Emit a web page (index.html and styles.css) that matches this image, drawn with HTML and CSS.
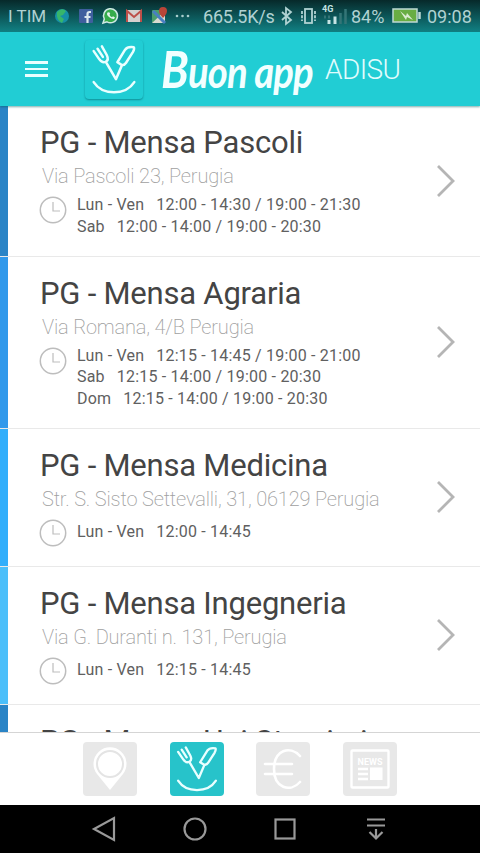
FILE: index.html
```
<!DOCTYPE html>
<html lang="it">
<head>
  <meta charset="UTF-8">
  <meta name="viewport" content="width=device-width, initial-scale=1.0">
  <title>Buon app ADISU</title>
  <link rel="stylesheet" href="styles.css">
</head>
<body>

  <!-- Shared icons -->
  <svg class="sprite" width="0" height="0">
    <symbol id="cutlery" viewBox="0 0 60 60">
      <g fill="none" stroke="currentColor" stroke-width="2.600" stroke-linecap="round" stroke-linejoin="round">
        <path d="M9 11l5.500 8q3.500 5 7 3t1-7l-5-9M13 8.500l5.500 8.500M22 23l10 17L38 26"/>
        <path d="M33.500 22.500l8-13q2.500-3.500 9-2.500q1 1-1 5l-7 11q-2 3-5 2l-4-2.500z"/>
        <path d="M9 43c9 14 33 14 42 0"/>
      </g>
    </symbol>
    <symbol id="clock" viewBox="0 0 28 28">
      <g fill="none" stroke="#bdbdbd">
        <circle cx="14" cy="14" r="12.700" stroke-width="1.500"/>
        <path d="M14 6v9h7" stroke-width="1.200"/>
      </g>
    </symbol>
    <symbol id="arrow" viewBox="0 0 20 34">
      <path d="M2 2l15 15L2 32" fill="none" stroke="#b5b5b5" stroke-width="2.800"/>
    </symbol>
  </svg>

  <!-- Status Bar -->
  <div class="status-bar">
    <span class="carrier">I TIM</span>
    <svg class="notifications" width="140" height="20" viewBox="0 0 140 20">
      <circle cx="8" cy="10" r="7" fill="#168fa5"/>
      <path d="M3 6q5-5 9-1l-3 4-3 1 4 3-2 4q-6-3-5-11z" fill="#37b56a"/>
      <rect x="25" y="3" width="14" height="14" rx="1" fill="#3f5f9e"/>
      <path d="M37 6h-1.500q-2 0-2 2v9M30.500 11h6" fill="none" stroke="#dbe8ee" stroke-width="2.200"/>
      <path d="M49 17l1.300-4A7 7 0 1 1 53 15.800z" fill="#35ab4b" stroke="#cfe9e4" stroke-width="1.500"/>
      <path d="M53.500 6.500q-1.500 2 1.500 4.500t5 2l1-1.500-2-1.300-1 1q-2-.7-2.500-2.500l.7-1-1-1.500z" fill="#e1f2ee"/>
      <rect x="72" y="4" width="16" height="12" rx="1" fill="#d5d0cf"/>
      <path d="M73 16V5l7 6 7-6v11" fill="none" stroke="#bd4f49" stroke-width="2"/>
      <rect x="98" y="4" width="13" height="13" rx="1" fill="#4b9e6d"/>
      <path d="M98 17L111 5v12z" fill="#d8dad0"/>
      <path d="M99 5l12 12" stroke="#4a7fc1" stroke-width="3"/>
      <path d="M109 12q-4-4-4-7a4 4 0 0 1 8 0q0 3-4 7z" fill="#b94538"/>
      <g fill="#a9cdcd"><circle cx="123" cy="10" r="1.300"/><circle cx="128.500" cy="10" r="1.300"/><circle cx="134" cy="10" r="1.300"/></g>
    </svg>
    <span class="speed">665.5K/s</span>
    <svg class="signals" width="70" height="26" viewBox="0 0 70 26">
      <g fill="none" stroke="#b0d2d2" stroke-width="1.800">
        <path d="M3 9l9 8-5 4V5l5 4-9 8"/>
        <rect x="26" y="6" width="7" height="14"/>
        <path d="M23 8v10M36 8v10" stroke-dasharray="3 1.200"/>
      </g>
      <text class="network" x="43" y="8.500">4G</text>
      <path d="M50 17v4M56 13.500v7.500" stroke="#c5e4e4" stroke-width="3"/>
      <path d="M61.500 10v11M66.500 6v15" stroke="#347577" stroke-width="2.500"/>
      <path d="M45 14h7" stroke="#347577" stroke-width="3" stroke-dasharray="2 2"/>
    </svg>
    <span class="percent">84%</span>
    <svg class="battery" width="30" height="16" viewBox="0 0 30 16">
      <rect x="2" y="1" width="24" height="13" fill="#69ad43" stroke="#bfdad5" stroke-width="1.500"/>
      <path d="M28.500 4v7" stroke="#bfdad5" stroke-width="2.500"/>
      <path d="M9 3l6 5 1-3 6 7-6-3-1 3z" fill="#dcebd2"/>
    </svg>
    <span class="time">09:08</span>
  </div>

  <!-- Header Section -->
  <header class="navbar">
    <div class="hamburger">
      <div></div>
      <div></div>
      <div></div>
    </div>
    <div class="logo"><svg width="58" height="59"><use href="#cutlery"/></svg></div>
    <div class="brand">Buon app</div>
    <div class="brand-sub">ADISU</div>
  </header>

  <!-- Canteen List -->
  <main class="canteens">
    <article class="card blue-1">
      <div class="info">
        <h2>PG - Mensa Pascoli</h2>
        <p class="address">Via Pascoli 23, Perugia</p>
        <div class="hours">
          <svg class="clock" width="28" height="28"><use href="#clock"/></svg>
          <ul>
            <li><span>Lun - Ven</span>12:00 - 14:30 / 19:00 - 21:30</li>
            <li><span>Sab</span>12:00 - 14:00 / 19:00 - 20:30</li>
          </ul>
        </div>
      </div>
      <svg class="arrow" width="20" height="34"><use href="#arrow"/></svg>
    </article>

    <article class="card blue-2">
      <div class="info">
        <h2>PG - Mensa Agraria</h2>
        <p class="address">Via Romana, 4/B Perugia</p>
        <div class="hours">
          <svg class="clock" width="28" height="28"><use href="#clock"/></svg>
          <ul>
            <li><span>Lun - Ven</span>12:15 - 14:45 / 19:00 - 21:00</li>
            <li><span>Sab</span>12:15 - 14:00 / 19:00 - 20:30</li>
            <li><span>Dom</span>12:15 - 14:00 / 19:00 - 20:30</li>
          </ul>
        </div>
      </div>
      <svg class="arrow" width="20" height="34"><use href="#arrow"/></svg>
    </article>

    <article class="card blue-3">
      <div class="info">
        <h2>PG - Mensa Medicina</h2>
        <p class="address">Str. S. Sisto Settevalli, 31, 06129 Perugia</p>
        <div class="hours">
          <svg class="clock" width="28" height="28"><use href="#clock"/></svg>
          <ul>
            <li><span>Lun - Ven</span>12:00 - 14:45</li>
          </ul>
        </div>
      </div>
      <svg class="arrow" width="20" height="34"><use href="#arrow"/></svg>
    </article>

    <article class="card blue-4">
      <div class="info">
        <h2>PG - Mensa Ingegneria</h2>
        <p class="address">Via G. Duranti n. 131, Perugia</p>
        <div class="hours">
          <svg class="clock" width="28" height="28"><use href="#clock"/></svg>
          <ul>
            <li><span>Lun - Ven</span>12:15 - 14:45</li>
          </ul>
        </div>
      </div>
      <svg class="arrow" width="20" height="34"><use href="#arrow"/></svg>
    </article>

    <article class="card blue-1">
      <div class="info">
        <h2>PG - Mensa Uni Stranieri</h2>
      </div>
    </article>
  </main>

  <!-- Tab Bar -->
  <nav class="tabs">
    <div class="tab">
      <svg width="54" height="54" viewBox="0 0 54 54">
        <path d="M27 48L14 32A16.500 16.500 0 1 1 40 32z" fill="#fff"/>
        <circle cx="27" cy="22" r="13" fill="none" stroke="#e4e4e4" stroke-width="2"/>
      </svg>
    </div>
    <div class="tab active"><svg width="54" height="54"><use href="#cutlery"/></svg></div>
    <div class="tab">
      <svg width="54" height="54" viewBox="0 0 54 54">
        <path d="M44 14C34 3 18 8 18 27s16 24 26 13M9 22h27M9 32h27" fill="none" stroke="#fff" stroke-width="2.600" stroke-linecap="round"/>
      </svg>
    </div>
    <div class="tab">
      <svg width="54" height="54" viewBox="0 0 54 54">
        <rect x="8.500" y="8.500" width="37" height="37" rx="1" fill="none" stroke="#fff" stroke-width="2.400"/>
        <text class="news" x="14.500" y="23" textLength="25">NEWS</text>
        <path d="M15 27h10M15 32h10M15 37h10" stroke="#fff" stroke-width="2.400"/>
        <rect x="27" y="25.500" width="12.500" height="12.500" fill="#fff"/>
      </svg>
    </div>
  </nav>

  <!-- System Buttons -->
  <div class="system-bar">
    <svg width="30" height="30" viewBox="0 0 30 30"><path d="M25 4v22L5 15z"/></svg>
    <svg width="30" height="30" viewBox="0 0 30 30"><circle cx="15" cy="15" r="10.500"/></svg>
    <svg width="30" height="30" viewBox="0 0 30 30"><rect x="5.500" y="5.500" width="19" height="19"/></svg>
    <svg width="30" height="30" viewBox="0 0 30 30"><path d="M6 5.500h18M6 11.500h18M15 15v9M8.500 18l6.500 6.500 6.500-6.500"/></svg>
  </div>

</body>
</html>
```
FILE: styles.css
```
* {
  margin: 0;
  padding: 0;
  box-sizing: border-box;
  font-family: Roboto, sans-serif;
}

body {
  display: flex;
  flex-direction: column;
  height: 853px;
  overflow: hidden;
  background-color: #fff;
}

svg {
  display: block;
  flex-shrink: 0;
}

.sprite {
  position: absolute;
}

/* Status Bar */
.status-bar {
  display: flex;
  align-items: center;
  flex-shrink: 0;
  height: 32px;
  padding-left: 8px;
  background: linear-gradient(#07292a, #118184);
  color: #b0d2d2;
  font-size: 18px;
  white-space: nowrap;
}

.carrier {
  width: 46px;
  font-size: 17px;
}

.speed {
  width: 76px;
  margin-left: 9px;
  letter-spacing: -0.200px;
}

.signals {
  margin-right: 2px;
}

.network {
  font-size: 9px;
  font-weight: bold;
  fill: #c5e4e4;
}

.percent {
  width: 40px;
}

.battery {
  margin-right: 6px;
}

/* Header Styles */
.navbar {
  display: flex;
  align-items: center;
  flex-shrink: 0;
  height: 74.300px;
  padding-left: 25px;
  background-color: #21cdd4;
  color: #fff;
  box-shadow: 0 1px 2px rgba(0, 90, 90, 0.5);
  z-index: 1;
}

.hamburger {
  width: 23px;
}

.hamburger div {
  height: 2.500px;
  margin: 4px 0;
  background-color: #e9ffff;
}

.logo {
  margin-left: 37px;
  border-radius: 4px;
  color: #e9ffff;
  box-shadow: 0 1px 2px rgba(0, 100, 110, 0.6);
}

.brand {
  width: 164px;
  margin-left: 18px;
  color: #f2ffff;
  font-family: "Segoe Script", Lato, cursive;
  font-size: 44px;
  font-style: italic;
  font-weight: bold;
  letter-spacing: -1px;
  line-height: 62px;
  white-space: nowrap;
  transform: scaleX(0.87);
  transform-origin: left;
}

.brand::first-letter {
  font-size: 52px;
}

.brand-sub {
  font-size: 28px;
  font-weight: 300;
  letter-spacing: -0.600px;
  color: #e0fcfd;
}

/* Canteen List */
.canteens {
  flex: 1;
  min-height: 0;
  overflow: hidden;
}

.card {
  display: flex;
  align-items: center;
  padding: 18px 24px 19px 40px;
  border-bottom: 1px solid #e9e9e9;
}

.blue-1 {
  box-shadow: inset 8px 0 #2a84c6;
}

.blue-2 {
  box-shadow: inset 8px 0 #3199eb;
}

.blue-3 {
  box-shadow: inset 8px 0 #31aefb;
}

.blue-4 {
  box-shadow: inset 8px 0 #4bbffa;
}

.info {
  flex: 1;
}

.card h2 {
  height: 36px;
  color: #444;
  font-size: 31px;
  font-weight: 400;
  letter-spacing: -0.220px;
  line-height: 37px;
  white-space: nowrap;
}

.address {
  height: 34px;
  padding-left: 2px;
  color: #a0a0a0;
  font-size: 20px;
  font-weight: 200;
  letter-spacing: -0.170px;
  line-height: 32px;
  white-space: nowrap;
}

.hours {
  display: flex;
  align-items: center;
  min-height: 30px;
}

.clock {
  align-self: flex-start;
  margin: 2px 10px 0 -1px;
}

.hours ul {
  list-style: none;
}

.hours li {
  color: #606060;
  font-size: 16px;
  letter-spacing: 0.200px;
  line-height: 21.330px;
  white-space: nowrap;
}

.hours span {
  margin-right: 12px;
}

/* Tab Bar */
.tabs {
  display: flex;
  align-items: center;
  justify-content: center;
  gap: 32.500px;
  flex-shrink: 0;
  height: 73px;
  border-top: 1px solid #d5d5d5;
  background-color: #fff;
}

.tab {
  border-radius: 4px;
  background-color: #e8e8e8;
}

.tab.active {
  background-color: #27c3ca;
  color: #e9ffff;
}

.news {
  font-size: 9px;
  font-weight: bold;
  fill: #fff;
}

/* System Buttons */
.system-bar {
  display: flex;
  align-items: center;
  justify-content: center;
  gap: 60.500px;
  flex-shrink: 0;
  height: 48px;
  background-color: #000;
}

.system-bar svg {
  fill: none;
  stroke: #999;
  stroke-width: 2.200;
}
```
